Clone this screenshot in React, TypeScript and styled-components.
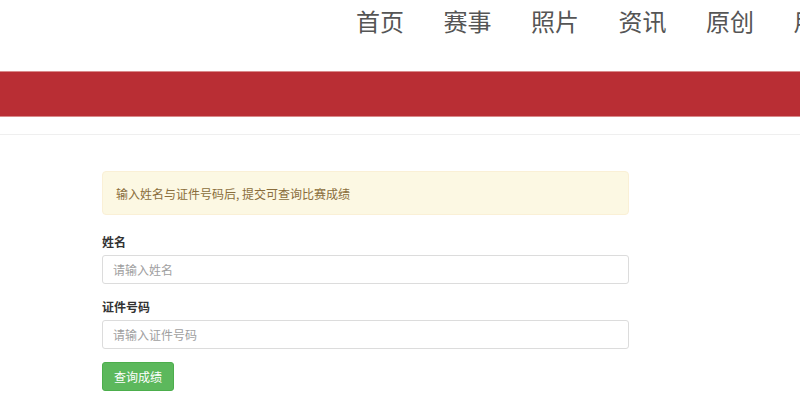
import * as React from 'react';
import styled, { createGlobalStyle } from 'styled-components';

const GlobalStyle = createGlobalStyle`
    html, body {
        margin: 0;
        padding: 0;
        background: #fff;
        font-family: "Noto Sans CJK SC", "Noto Sans", "Liberation Sans", sans-serif;
        overflow: hidden;
    }
`;

const Page = styled.div`
    width: 800px;
    height: 409px;
    overflow: hidden;
`;

const Header = styled.header`
    height: 71px;
    display: flex;
    align-items: flex-start;
    padding-left: 356px;
    overflow: hidden;
`;

const NavList = styled.nav`
    display: flex;
    gap: 39.5px;
    white-space: nowrap;
    padding-top: 4px;
`;

const NavItem = styled.a`
    font-size: 24px;
    line-height: 34px;
    color: #555;
    text-decoration: none;
`;

const Banner = styled.div`
    height: 46px;
    background: #b92e34;
    border-top: 1px solid #d98a8a;
    border-bottom: 1px solid #d98a8a;
    box-sizing: border-box;
`;

const Divider = styled.div`
    margin-top: 17px;
    height: 1px;
    background: #efefef;
`;

const Content = styled.main`
    width: 527px;
    margin-left: 102px;
    padding-top: 36px;
`;

const Alert = styled.div`
    box-sizing: border-box;
    height: 44px;
    display: flex;
    align-items: center;
    padding: 0 13px;
    background: #fcf8e3;
    border: 1px solid #faf0d6;
    border-radius: 4px;
    color: #8a6d3b;
    font-size: 12px;
    margin-bottom: 18px;
`;

const Field = styled.div`
    display: flex;
    flex-direction: column;
    gap: 4px;

    & + & {
        margin-top: 14px;
    }
`;

const Label = styled.label`
    font-size: 12px;
    font-weight: 700;
    color: #333;
    line-height: 18px;
`;

const Input = styled.input`
    box-sizing: border-box;
    width: 100%;
    height: 29px;
    padding: 0 10px;
    font-size: 12px;
    font-family: inherit;
    border: 1px solid #dcdcdc;
    border-radius: 3px;
    color: #555;
    outline: none;
    &::placeholder {
        color: #a0a0a0;
    }
`;

const SubmitButton = styled.button`
    box-sizing: border-box;
    height: 29px;
    padding: 0 11px;
    margin-top: 13px;
    background: #5cb85c;
    border: 1px solid #4cae4c;
    border-radius: 3px;
    color: #fff;
    font-size: 12px;
    font-family: inherit;
    cursor: pointer;
`;

const navItems = ['首页', '赛事', '照片', '资讯', '原创', '用户'];

const App: React.FC = () => (
    <Page>
        <GlobalStyle />
        <Header>
            <NavList>
                { navItems.map((item) => <NavItem key={ item } href="#">{ item }</NavItem>) }
            </NavList>
        </Header>
        <Banner />
        <Divider />
        <Content>
            <Alert>输入姓名与证件号码后, 提交可查询比赛成绩</Alert>
            <Field>
                <Label htmlFor="name">姓名</Label>
                <Input id="name" placeholder="请输入姓名" />
            </Field>
            <Field>
                <Label htmlFor="idno">证件号码</Label>
                <Input id="idno" placeholder="请输入证件号码" />
            </Field>
            <SubmitButton type="button">查询成绩</SubmitButton>
        </Content>
    </Page>
);

export default App;
